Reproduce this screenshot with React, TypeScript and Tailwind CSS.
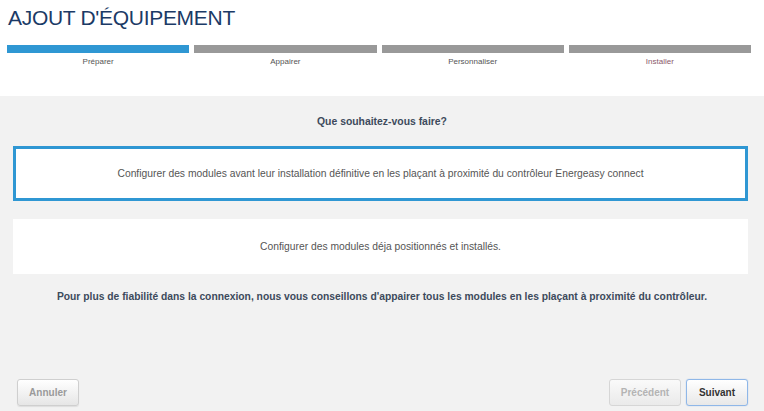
import React from "react";

const steps = [
  { label: "Préparer", active: true, color: "text-[#555]" },
  { label: "Appairer", active: false, color: "text-[#555]" },
  { label: "Personnaliser", active: false, color: "text-[#555]" },
  { label: "Installer", active: false, color: "text-[#8a5a6a]" },
];

export default function App() {
  return (
    <div
      className="w-[764px] h-[411px] flex flex-col bg-[#f2f2f2] overflow-hidden"
      style={{ fontFamily: '"Liberation Sans", Arial, sans-serif' }}
    >
      <div className="bg-white h-[96px] flex flex-col shrink-0">
        <h1 className="pl-[8px] pt-[6px] text-[21px] leading-[24px] tracking-[-0.3px] text-[#1b3a66] font-normal">
          AJOUT D'ÉQUIPEMENT
        </h1>
        <div className="mt-[15px] ml-[7px] grid grid-cols-4 gap-[5px] w-[744px]">
          {steps.map((s) => (
            <div key={s.label} className="flex flex-col items-center">
              <div
                className={
                  s.active
                    ? "h-[8px] w-full bg-[#2f97d3]"
                    : "h-[8px] w-full bg-[#999999]"
                }
              />
              <div className={"mt-[4px] text-[8px] leading-[10px] " + s.color}>
                {s.label}
              </div>
            </div>
          ))}
        </div>
      </div>

      <div className="flex-1 flex flex-col">
        <div className="pt-[20px] text-center text-[10.4px] leading-[12px] font-bold text-[#3d4a5c]">
          Que souhaitez-vous faire?
        </div>
        <div className="mt-[18px] ml-[13px] w-[735px] h-[55px] border-[3px] border-[#2f97d3] bg-white flex items-center justify-center text-[10.3px] text-[#555]">
          Configurer des modules avant leur installation définitive en les plaçant à proximité du contrôleur Energeasy connect
        </div>
        <div className="mt-[18px] ml-[13px] w-[735px] h-[55px] bg-white flex items-center justify-center text-[10.3px] text-[#555]">
          Configurer des modules déja positionnés et installés.
        </div>
        <div className="mt-[17px] text-center text-[10.3px] leading-[12px] font-bold text-[#3d4a5c]">
          Pour plus de fiabilité dans la connexion, nous vous conseillons d'appairer tous les modules en les plaçant à proximité du contrôleur.
        </div>
        <div className="mt-auto mb-[5px] flex items-center pl-[17px] pr-[16px]">
          <button className="w-[62px] h-[27px] rounded-[3px] border border-[#cfcfcf] bg-gradient-to-b from-white to-[#e6e6e6] text-[10px] font-bold text-[#9a9a9a] shadow-[0_1px_1px_rgba(0,0,0,0.08)]">
            Annuler
          </button>
          <div className="flex-1" />
          <button className="w-[72px] h-[27px] rounded-[3px] border border-[#d6d6d6] bg-gradient-to-b from-[#fafafa] to-[#eaeaea] text-[10px] font-bold text-[#b4b4b4]">
            Précédent
          </button>
          <button className="ml-[5px] w-[62px] h-[27px] rounded-[3px] border border-[#8fb7e8] bg-gradient-to-b from-white to-[#e8e8e8] text-[10px] font-bold text-[#333] shadow-[0_0_1px_rgba(80,140,220,0.6)]">
            Suivant
          </button>
        </div>
      </div>
    </div>
  );
}
